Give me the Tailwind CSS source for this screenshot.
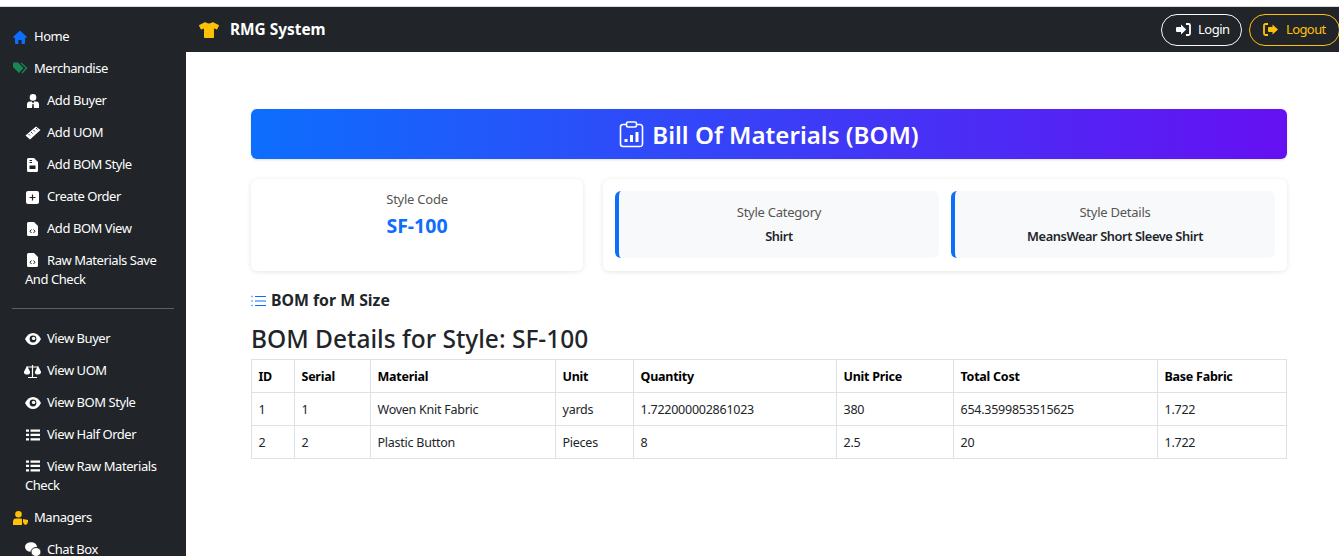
<!DOCTYPE html>
<html lang="en">

<head>
    <meta charset="UTF-8">
    <title>Bill Of Materials</title>
    <script src="https://cdn.jsdelivr.net/npm/@tailwindcss/browser@4"></script>
</head>

<body class="h-[556px] overflow-hidden bg-white font-['Noto_Sans',sans-serif] text-[#212529]">
    <div class="h-[7px] bg-white border-b border-[#dcdcdc]"></div>

    <!-- Top bar -->
    <header class="h-[45px] bg-[#212529] flex items-center pl-[199px] text-white">
        <svg class="w-[20px] h-[16px] text-[#ffc107]" viewBox="0 0 640 512" fill="currentColor"><path d="M631.2 96.5L436.5 0C416.4 27.8 371.9 47.2 320 47.2S223.6 27.8 203.5 0L8.8 96.5c-7.9 4-11.1 13.6-7.2 21.5l57.2 114.5c4 7.9 13.6 11.1 21.5 7.2l56.6-27.7c10.6-5.2 23 2.5 23 14.4V480c0 17.7 14.3 32 32 32h256c17.7 0 32-14.3 32-32V226.3c0-11.8 12.4-19.6 23-14.4l56.6 27.7c7.9 4 17.5.8 21.5-7.2L638.3 118c4-7.9.8-17.6-7.1-21.5z"/></svg>
        <span class="ml-[11px] text-[15.4px] font-bold">RMG System</span>
        <div class="ml-auto -mr-[1px] flex items-center gap-[7px]">
            <a class="h-[32px] w-[81px] flex items-center pl-[14px] gap-[7px] rounded-full border border-[#f8f9fa] text-[13px] tracking-[-0.5px]">
                <svg class="w-[15px] h-[13px]" viewBox="0 0 15 13" fill="currentColor"><path d="M0 5Q0 4 1 4H5V1.5L10.2 6.5L5 11.5V9H1Q0 9 0 8Z"/><path d="M10 1H12.5Q14 1 14 2.5V10.5Q14 12 12.5 12H10" fill="none" stroke="currentColor" stroke-width="1.8"/></svg>
                Login
            </a>
            <a class="h-[32px] w-[91px] flex items-center pl-[13px] gap-[8px] rounded-full border border-[#ffc107] text-[#ffc107] text-[13px] tracking-[-0.6px]">
                <svg class="w-[15px] h-[13px]" viewBox="0 0 15 13" fill="currentColor"><path d="M5 5Q5 4 6 4H9.5V1.5L15 6.5L9.5 11.5V9H6Q5 9 5 8Z"/><path d="M5 1H2.5Q1 1 1 2.5V10.5Q1 12 2.5 12H5" fill="none" stroke="currentColor" stroke-width="1.8"/></svg>
                Logout
            </a>
        </div>
    </header>

    <div class="flex h-[504px]">
        <main class="ml-[186px] flex-1 pl-[65px] pr-[52px] pt-[57px]">
            <!-- Title banner -->
            <div class="h-[50px] rounded-md bg-[linear-gradient(90deg,#0d6efd,#6610f2)] text-white flex items-center justify-center gap-[8px] shadow-sm">
                <svg class="w-[25px] h-[27px]" viewBox="0 0 25 27" fill="none" stroke="currentColor" stroke-width="1.6"><path d="M7 3.5H4A2.5 2.5 0 0 0 1.5 6V23A2.5 2.5 0 0 0 4 25.5H21A2.5 2.5 0 0 0 23.5 23V6A2.5 2.5 0 0 0 21 3.5H18"/><rect x="7.5" y="1" width="10" height="5" rx="1.5"/><path d="M7 21V18M12.5 21V14M18 21V11" stroke-width="3"/></svg>
                <h1 class="pt-[3px] text-[24.1px] font-semibold">Bill Of Materials (BOM)</h1>
            </div>

            <!-- Info cards -->
            <div class="mt-[20px] grid grid-cols-[332px_1fr] gap-[20px]">
                <div class="h-[92px] rounded-md bg-white shadow-[0_1px_5px_rgba(0,0,0,0.1)] text-center pt-[11px]">
                    <p class="text-[13px] text-[#555] tracking-[-0.25px]">Style Code</p>
                    <p class="mt-[1px] text-[19.5px] font-bold text-[#0d6efd]">SF-100</p>
                </div>
                <div class="h-[92px] rounded-md bg-white shadow-[0_1px_5px_rgba(0,0,0,0.1)] pt-[12px] px-[12px] pb-[13px] grid grid-cols-2 gap-[12px]">
                    <div class="rounded-md border-l-4 border-[#0d6efd] bg-[#f8f9fa] text-center pt-[12px]">
                        <p class="text-[13px] text-[#555] tracking-[-0.25px]">Style Category</p>
                        <p class="mt-[4px] text-[12.8px] font-semibold tracking-[-0.4px]">Shirt</p>
                    </div>
                    <div class="rounded-md border-l-4 border-[#0d6efd] bg-[#f8f9fa] text-center pt-[12px]">
                        <p class="text-[13px] text-[#555] tracking-[-0.25px]">Style Details</p>
                        <p class="mt-[4px] text-[12.8px] font-semibold tracking-[-0.4px]">MeansWear Short Sleeve Shirt</p>
                    </div>
                </div>
            </div>

            <!-- Size heading -->
            <div class="mt-[18px] flex items-center gap-[5px]">
                <svg class="w-[15px] h-[12px] text-[#0d6efd]" viewBox="0 0 15 12" fill="none" stroke="currentColor"><path d="M4 1.5H15M4 6H15M4 10.5H15"/><path d="M0.5 1.5H1.5M0.5 6H1.5M0.5 10.5H1.5" stroke-width="1.5"/></svg>
                <h5 class="text-[15.8px] font-bold">BOM for M Size</h5>
            </div>

            <h3 class="mt-[10px] text-[24.5px] font-medium leading-[32px]">BOM Details for Style: SF-100</h3>

            <!-- BOM table -->
            <table class="mt-[4px] w-full table-fixed border-collapse text-[12.5px] tracking-[-0.25px] [&_td]:pt-[4px] [&_th]:pt-[4px]">
                <colgroup>
                    <col class="w-[43px]"><col class="w-[76px]"><col class="w-[185px]"><col class="w-[78px]"><col class="w-[203px]"><col class="w-[117px]"><col class="w-[204px]"><col>
                </colgroup>
                <thead>
                    <tr class="h-[33px] text-left text-black">
                        <th class="border border-[#dee2e6] px-[6.5px] font-bold">ID</th>
                        <th class="border border-[#dee2e6] px-[6.5px] font-bold">Serial</th>
                        <th class="border border-[#dee2e6] px-[6.5px] font-bold">Material</th>
                        <th class="border border-[#dee2e6] px-[6.5px] font-bold">Unit</th>
                        <th class="border border-[#dee2e6] px-[6.5px] font-bold">Quantity</th>
                        <th class="border border-[#dee2e6] px-[6.5px] font-bold">Unit Price</th>
                        <th class="border border-[#dee2e6] px-[6.5px] font-bold">Total Cost</th>
                        <th class="border border-[#dee2e6] px-[6.5px] font-bold">Base Fabric</th>
                    </tr>
                </thead>
                <tbody>
                    <tr class="h-[33px]">
                        <td class="border border-[#dee2e6] px-[6.5px]">1</td>
                        <td class="border border-[#dee2e6] px-[6.5px]">1</td>
                        <td class="border border-[#dee2e6] px-[6.5px]">Woven Knit Fabric</td>
                        <td class="border border-[#dee2e6] px-[6.5px]">yards</td>
                        <td class="border border-[#dee2e6] px-[6.5px]">1.722000002861023</td>
                        <td class="border border-[#dee2e6] px-[6.5px]">380</td>
                        <td class="border border-[#dee2e6] px-[6.5px]">654.3599853515625</td>
                        <td class="border border-[#dee2e6] px-[6.5px]">1.722</td>
                    </tr>
                    <tr class="h-[33px]">
                        <td class="border border-[#dee2e6] px-[6.5px]">2</td>
                        <td class="border border-[#dee2e6] px-[6.5px]">2</td>
                        <td class="border border-[#dee2e6] px-[6.5px]">Plastic Button</td>
                        <td class="border border-[#dee2e6] px-[6.5px]">Pieces</td>
                        <td class="border border-[#dee2e6] px-[6.5px]">8</td>
                        <td class="border border-[#dee2e6] px-[6.5px]">2.5</td>
                        <td class="border border-[#dee2e6] px-[6.5px]">20</td>
                        <td class="border border-[#dee2e6] px-[6.5px]">1.722</td>
                    </tr>
                </tbody>
            </table>
        </main>
    </div>

    <!-- Sidebar overlays the page from under the top white strip -->
    <nav class="fixed top-[7px] left-0 w-[186px] h-[549px] bg-[#212529] overflow-hidden pt-[14px] text-white text-[13px] tracking-[-0.45px]">
        <a class="flex items-center h-[32px] pl-[13px]">
            <svg class="w-[14px] h-[14px] -mt-[1px] text-[#0d6efd]" viewBox="0 0 14 14" fill="currentColor"><path d="M7 0.5L14 7L13 8.2L12 7.4V13A1 1 0 0 1 11 14H8.6V10H5.4V14H3A1 1 0 0 1 2 13V7.4L1 8.2L0 7Z"/></svg>
            <span class="ml-[7px]">Home</span>
        </a>
        <a class="flex items-center h-[32px] pl-[13px]">
            <svg class="w-[15px] h-[12px] -mt-[3px] text-[#198754]" viewBox="0 0 15 12" fill="currentColor"><path d="M0 1.5A1 1 0 0 1 1 0.5H5L10.5 6L6 11L0 5Z"/><path d="M8 1L13.5 6L9 11" fill="none" stroke="currentColor" stroke-width="1.3"/></svg>
            <span class="ml-[6px]">Merchandise</span>
        </a>
        <a class="flex items-center h-[32px] pl-[27px]">
            <svg class="w-[12px] h-[14px] -mt-[1px]" viewBox="0 0 12 14" fill="currentColor"><circle cx="6" cy="3.4" r="3.3"/><path d="M0 14V10.5Q0 7.6 3 7.6H4.8L6 9.5L7.2 7.6H9Q12 7.6 12 10.5V14H7L6.6 10H5.4L5 14Z"/></svg>
            <span class="ml-[8px]">Add Buyer</span>
        </a>
        <a class="flex items-center h-[32px] pl-[25px]">
            <svg class="w-[16px] h-[14px]" viewBox="0 0 16 14" fill="currentColor"><path d="M0.5 9.5L11 0.5L15.5 4L5 13.5Z"/><path d="M3.5 8L5 9.5M6 6L7.5 7.5M8.5 4L10 5.5M11 2L12.5 3.5" stroke="#212529" stroke-width="0.9"/></svg>
            <span class="ml-[6px]">Add UOM</span>
        </a>
        <a class="flex items-center h-[32px] pl-[27px]">
            <svg class="w-[11px] h-[14px]" viewBox="0 0 11 14" fill="currentColor"><path d="M1.5 0H7L11 4V12.5A1.5 1.5 0 0 1 9.5 14H1.5A1.5 1.5 0 0 1 0 12.5V1.5A1.5 1.5 0 0 1 1.5 0Z"/><path d="M2.5 2.5H5M2.5 4.5H5" stroke="#212529"/><rect x="2.5" y="7.5" width="6" height="3.5" fill="#212529"/></svg>
            <span class="ml-[9px]">Add BOM Style</span>
        </a>
        <a class="flex items-center h-[32px] pl-[26px]">
            <svg class="w-[13px] h-[13px]" viewBox="0 0 13 13"><rect width="13" height="13" rx="2" fill="currentColor"/><path d="M6.5 3.5V9.5M3.5 6.5H9.5" stroke="#212529" stroke-width="1.2"/></svg>
            <span class="ml-[8px]">Create Order</span>
        </a>
        <a class="flex items-center h-[32px] pl-[27px]">
            <svg class="w-[11px] h-[14px]" viewBox="0 0 11 14" fill="currentColor"><path d="M1.5 0H7L11 4V12.5A1.5 1.5 0 0 1 9.5 14H1.5A1.5 1.5 0 0 1 0 12.5V1.5A1.5 1.5 0 0 1 1.5 0Z"/><path d="M4.5 7.5L3 9.2L4.5 11M6.5 7.5L8 9.2L6.5 11" fill="none" stroke="#212529"/></svg>
            <span class="ml-[9px]">Add BOM View</span>
        </a>
        <a class="block pl-[25px] pr-[8px] pt-[6px] pb-[6px] leading-[19px]">
            <svg class="inline-block ml-[2px] mr-[9px] w-[11px] h-[14px] align-[-2px]" viewBox="0 0 11 14" fill="currentColor"><path d="M1.5 0H7L11 4V12.5A1.5 1.5 0 0 1 9.5 14H1.5A1.5 1.5 0 0 1 0 12.5V1.5A1.5 1.5 0 0 1 1.5 0Z"/><path d="M4.5 7.5L3 9.2L4.5 11M6.5 7.5L8 9.2L6.5 11" fill="none" stroke="#212529"/></svg>Raw Materials Save And Check
        </a>
        <hr class="mx-[12px] mt-[13px] mb-[14px] border-[#5c6063]">
        <a class="flex items-center h-[32px] pl-[25px]">
            <svg class="w-[16px] h-[12px] -mt-[1px]" viewBox="0 0 16 12" fill="currentColor"><path d="M0 6Q3 0 8 0T16 6Q13 12 8 12T0 6Z"/><circle cx="8" cy="6" r="3.4" fill="#212529"/><circle cx="8.6" cy="5.4" r="1.7"/></svg>
            <span class="ml-[6px]">View Buyer</span>
        </a>
        <a class="flex items-center h-[32px] pl-[24px]">
            <svg class="w-[17px] h-[13px]" viewBox="0 0 17 13" fill="none" stroke="currentColor" stroke-width="1.2"><path d="M8.5 0V12M4 12.5H13M3 2H14"/><path d="M0.5 7L3 2L5.5 7A2.5 2 0 0 1 0.5 7ZM11.5 7L14 2L16.5 7A2.5 2 0 0 1 11.5 7Z" fill="currentColor"/></svg>
            <span class="ml-[6px]">View UOM</span>
        </a>
        <a class="flex items-center h-[32px] pl-[25px]">
            <svg class="w-[16px] h-[12px] -mt-[1px]" viewBox="0 0 16 12" fill="currentColor"><path d="M0 6Q3 0 8 0T16 6Q13 12 8 12T0 6Z"/><circle cx="8" cy="6" r="3.4" fill="#212529"/><circle cx="8.6" cy="5.4" r="1.7"/></svg>
            <span class="ml-[6px]">View BOM Style</span>
        </a>
        <a class="flex items-center h-[32px] pl-[26px]">
            <svg class="w-[14px] h-[12px]" viewBox="0 0 14 12" fill="currentColor"><path d="M0 0.5H3V2.8H0ZM4.5 0.5H14V2.8H4.5ZM0 4.8H3V7.1H0ZM4.5 4.8H14V7.1H4.5ZM0 9.2H3V11.5H0ZM4.5 9.2H14V11.5H4.5Z"/></svg>
            <span class="ml-[7px]">View Half Order</span>
        </a>
        <a class="block pl-[25px] pr-[8px] pt-[6px] pb-[6px] leading-[19px]">
            <svg class="inline-block ml-[1px] mr-[7px] w-[14px] h-[12px] align-[-1px]" viewBox="0 0 14 12" fill="currentColor"><path d="M0 0.5H3V2.8H0ZM4.5 0.5H14V2.8H4.5ZM0 4.8H3V7.1H0ZM4.5 4.8H14V7.1H4.5ZM0 9.2H3V11.5H0ZM4.5 9.2H14V11.5H4.5Z"/></svg>View Raw Materials Check
        </a>
        <a class="flex items-center h-[32px] mt-[1px] pl-[13px]">
            <svg class="w-[15px] h-[14px] -mt-[1px] text-[#ffc107]" viewBox="0 0 15 14" fill="currentColor"><circle cx="5.5" cy="3.3" r="3.3"/><path d="M0 14V11Q0 7.6 3 7.6H8Q9 7.6 9 8.5V14Z"/><path d="M10 8L15 9V11Q14.5 13.4 12.5 14Q10.5 13.4 10 11Z"/></svg>
            <span class="ml-[6px]">Managers</span>
        </a>
        <a class="flex items-center h-[32px] pl-[25px]">
            <svg class="w-[16px] h-[15px] -mt-[1px]" viewBox="0 0 16 15" fill="currentColor"><ellipse cx="6" cy="5" rx="6" ry="4.8"/><ellipse cx="11" cy="10" rx="5" ry="4.5" stroke="#212529"/></svg>
            <span class="ml-[6px]">Chat Box</span>
        </a>
    </nav>
</body>

</html>
